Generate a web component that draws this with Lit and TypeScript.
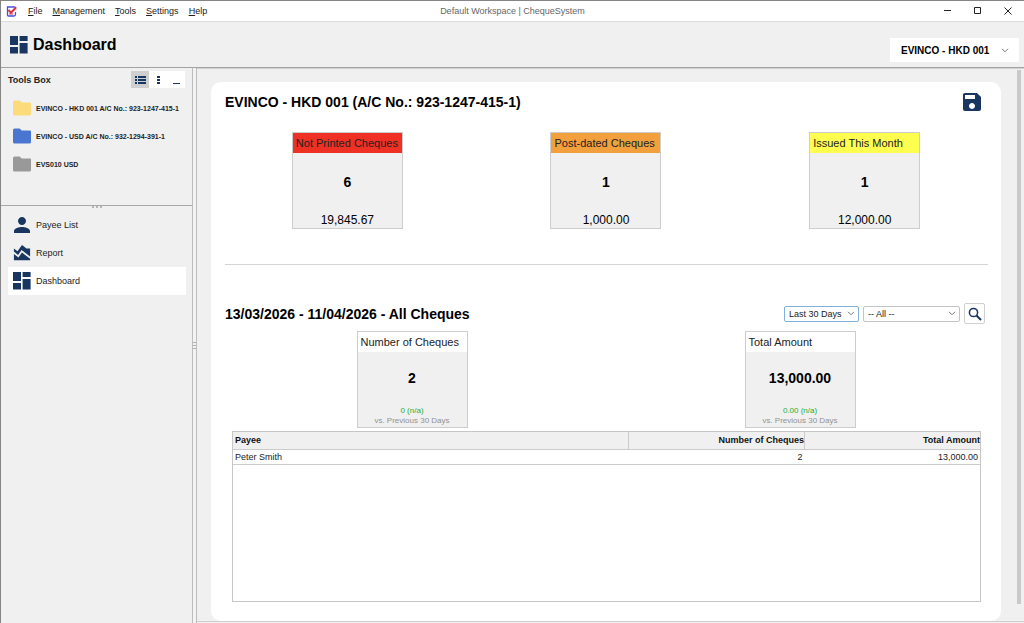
import { LitElement, html, css, svg } from "lit";
import { customElement, property, state } from "lit/decorators.js";
import { classMap } from "lit/directives/class-map.js";

const NAVY = "#18365f";

const dashboardIcon = html`<svg viewBox="0 0 18 18" width="18" height="18" fill=${NAVY} aria-hidden="true">
  <path d="M0 0h8v9H0zM9.600 0h8v5h-8zM0 11h8v6.500H0zM9.600 7h8v10.500h-8z" />
</svg>`;

const personIcon = html`<svg viewBox="3 3 18 18" width="18" height="18" fill=${NAVY} aria-hidden="true">
  <path d="M12 12c2.210 0 4-1.790 4-4s-1.790-4-4-4-4 1.790-4 4 1.790 4 4 4zm0 2c-2.670 0-8 1.340-8 4v2h16v-2c0-2.660-5.330-4-8-4z" />
</svg>`;

const reportIcon = html`<svg viewBox="2 2 20 20" width="18" height="18" fill=${NAVY} aria-hidden="true">
  <path d="M3 13v7h18v-1.500l-9-7L8 17zM3 7l4 3 5-7 5 4h4v8.970l-9.400-7.310-3.980 5.480L3 10.440z" />
</svg>`;

const saveIcon = html`<svg viewBox="3 3 18 18" width="18" height="18" fill=${NAVY} aria-hidden="true">
  <path d="M17 3H5c-1.110 0-2 .9-2 2v14c0 1.100.89 2 2 2h14c1.100 0 2-.9 2-2V7l-4-4zm-5 16c-1.660 0-3-1.340-3-3s1.340-3 3-3 3 1.340 3 3-1.340 3-3 3zm3-10H5V5h10v4z" />
</svg>`;

const searchIcon = html`<svg viewBox="0 0 14 14" width="14" height="14" fill="none" stroke=${NAVY} aria-hidden="true">
  <circle cx="5.500" cy="5.500" r="4.100" stroke-width="1.500" />
  <path d="m8.500 8.500 4.500 4.500" stroke-width="2" />
</svg>`;

const logoIcon = html`<svg viewBox="0 0 11 11" width="11" height="11" fill="none" aria-hidden="true">
  <path d="M9 1H1.500v8q0 1 1 1h5.500q1.500 0 1.500-2V6" stroke="#4a4fd8" stroke-width="1.300" />
  <path d="M2.500 4 5 6.800 10.200 1.200" stroke="#e0303f" stroke-width="2" />
  <path d="M3 8h4" stroke="#e0303f" />
</svg>`;

const listIcon = html`<svg viewBox="0 0 11 8" width="11" height="8" fill=${NAVY} aria-hidden="true">
  <path d="M0 0h2v2H0zM3 0h8v2H3zM0 3h2v2H0zM3 3h8v2H3zM0 6h2v2H0zM3 6h8v2H3z" />
</svg>`;

const dotsIcon = html`<svg viewBox="0 0 11 8" width="11" height="8" fill=${NAVY} aria-hidden="true">
  <path d="M4 0h3v2H4zM4 3h3v2H4zM4 6h3v2H4z" />
</svg>`;

const collapseIcon = html`<svg viewBox="0 0 11 8" width="11" height="8" fill=${NAVY} aria-hidden="true">
  <path d="M2 7h7v1H2z" />
</svg>`;

const folderIcon = (color: string) => html`<svg viewBox="0 0 18 16" width="18" height="16" fill=${color} aria-hidden="true">
  <path d="M1.500.5h5.200l2 2H17q1 0 1 1V14q0 1.500-1.500 1.500h-15Q0 15.500 0 14V2Q0 .5 1.500.5z" />
</svg>`;

const windowGlyph = (d: string) => html`<svg viewBox="0 0 8 8" width="8" height="8" fill="none" stroke="#222" aria-hidden="true">
  ${svg`<path d=${d} />`}
</svg>`;

@customElement("combo-box")
export class ComboBox extends LitElement {
  @property() label = "";
  @property({ attribute: false }) options: string[] = [];

  static styles = css`
    :host {
      display: grid;
      align-items: center;
      box-sizing: border-box;
    }
    select,
    svg {
      grid-area: 1 / 1;
    }
    select {
      appearance: none;
      box-sizing: border-box;
      width: 100%;
      height: 100%;
      margin: 0;
      border: 0;
      padding: 0 16px 0 var(--combo-inset, 4px);
      background: transparent;
      color: inherit;
      font: inherit;
      outline: none;
    }
    svg {
      justify-self: end;
      margin-right: var(--combo-arrow, 3px);
      pointer-events: none;
    }
  `;

  render() {
    return html`
      <select aria-label=${this.label}>
        ${this.options.map((o) => html`<option>${o}</option>`)}
      </select>
      <svg viewBox="0 0 8 5" width="8" height="5" fill="none" stroke="#777" aria-hidden="true">
        <path d="m1 .8 3 3 3-3" />
      </svg>
    `;
  }
}

@customElement("stat-card")
export class StatCard extends LitElement {
  @property() heading = "";
  @property() value = "";
  @property() amount = "";
  @property() change = "";
  @property() note = "";
  @property() tone = "plain";

  static styles = css`
    :host {
      display: block;
      width: 111px;
    }
    .card {
      display: flex;
      flex-direction: column;
      box-sizing: border-box;
      height: 97px;
      border: 1px solid #cdcdcd;
      background: #f0f0f0;
      text-align: center;
    }
    .heading {
      margin: 0;
      padding: 0 3px;
      font-size: 11px;
      font-weight: normal;
      line-height: 20px;
      text-align: left;
      white-space: nowrap;
      color: #222;
    }
    .plain { background: #fff; }
    .red { background: #ee3124; }
    .orange { background: #f2a03d; }
    .yellow { background: #ffff50; }
    .value {
      flex: 1;
      display: grid;
      place-items: center;
      padding-bottom: 2px;
      font-size: 14px;
      font-weight: bold;
    }
    .amount {
      font-size: 12px;
      line-height: 16px;
    }
    .small {
      font-size: 8px;
      line-height: 10px;
      color: #929292;
    }
    .change { color: #1fae2b; }
    .note { margin-bottom: 1px; }
  `;

  render() {
    return html`
      <article class="card">
        <h3 class=${"heading " + this.tone}>${this.heading}</h3>
        <div class="value">${this.value}</div>
        ${this.amount ? html`<div class="amount">${this.amount}</div>` : ""}
        ${this.change ? html`<div class="small change">${this.change}</div>` : ""}
        ${this.note ? html`<div class="small note">${this.note}</div>` : ""}
      </article>
    `;
  }
}

@customElement("app-root")
export class AppRoot extends LitElement {
  @state() private page = "Dashboard";

  private menus = ["File", "Management", "Tools", "Settings", "Help"];

  private accounts = [
    { name: "EVINCO - HKD 001 A/C No.: 923-1247-415-1", color: "#fbdb7c" },
    { name: "EVINCO - USD A/C No.: 932-1294-391-1", color: "#4a76d2" },
    { name: "EVS010 USD", color: "#999999" },
  ];

  private pages = [
    { name: "Payee List", icon: personIcon },
    { name: "Report", icon: reportIcon },
    { name: "Dashboard", icon: dashboardIcon },
  ];

  private rows = [{ payee: "Peter Smith", count: "2", total: "13,000.00" }];

  static styles = css`
    :host {
      display: flex;
      flex-direction: column;
      box-sizing: border-box;
      height: 100vh;
      border: 1px solid #858585;
      border-width: 1px 0 0 1px;
      background: #f0f0f0;
      color: #000;
      font: 9px "Liberation Sans", Arial, sans-serif;
    }
    button {
      margin: 0;
      border: 0;
      padding: 0;
      background: none;
      color: inherit;
      font: inherit;
    }
    svg { display: block; flex: none; }
    h1, h2 { margin: 0; }

    .titlebar {
      display: grid;
      grid-template-columns: 1fr auto 1fr;
      align-items: center;
      height: 20px;
      border-bottom: 1px solid #dcdcdc;
      background: #fff;
    }
    .menus {
      display: flex;
      align-items: center;
      padding-left: 5px;
    }
    .menus svg { margin-right: 6px; }
    .menu { padding: 0 5px; line-height: 20px; color: #222; }
    .mnemonic { text-decoration: underline; }
    .title { color: #666; }
    .window {
      display: flex;
      justify-content: flex-end;
      gap: 22px;
      padding-right: 12px;
    }

    .header {
      display: flex;
      justify-content: space-between;
      height: 45px;
      border-bottom: 1px solid #a3a3a3;
    }
    .brand {
      display: flex;
      align-items: center;
      gap: 5px;
      padding-left: 9px;
      font-size: 16px;
    }
    .brand h1 { font-size: inherit; }
    .account {
      align-self: flex-end;
      width: 129px;
      height: 24px;
      margin: 0 5px 5px 0;
      background: #fff;
      font-size: 10px;
      font-weight: bold;
      --combo-inset: 11px;
      --combo-arrow: 10px;
    }

    .body {
      display: grid;
      grid-template-columns: 191px 5px 1fr;
      flex: 1;
      min-height: 0;
    }
    .sidebar { display: flex; flex-direction: column; }
    .toolbox {
      box-sizing: border-box;
      height: 138px;
      border-bottom: 1px solid #a8a8a8;
    }
    .toolhead {
      display: flex;
      align-items: center;
      justify-content: space-between;
      padding: 3px 7px 0;
      margin-bottom: 6px;
    }
    .toolhead h2 { font-size: 9px; color: #222; }
    .tools { display: flex; background: #fff; }
    .tool {
      display: grid;
      place-items: center;
      width: 18px;
      height: 17px;
    }
    .tool.on { background: #cfcfcf; }
    .accounts { display: flex; flex-direction: column; }
    .folder {
      display: flex;
      align-items: center;
      gap: 5px;
      height: 28px;
      padding-left: 12px;
      font-size: 7px;
      font-weight: bold;
      white-space: nowrap;
      color: #222;
    }
    .grip {
      display: flex;
      justify-content: center;
      gap: 2px;
      height: 2px;
      margin-bottom: 3px;
    }
    .grip i { width: 2px; background: #b5b5b5; }
    .pages {
      display: flex;
      flex-direction: column;
      padding: 0 6px 0 7px;
    }
    .page {
      display: flex;
      align-items: center;
      gap: 5px;
      height: 28px;
      padding-left: 5px;
      color: #222;
    }
    .page.on { background: #fff; }
    .splitter {
      display: flex;
      flex-direction: column;
      align-items: center;
      justify-content: center;
      gap: 2px;
      border: 1px solid #bdbdbd;
      border-width: 0 1px 0 1px;
      background: #f3f3f3;
    }
    .splitter i { width: 3px; height: 1px; background: #b0b0b0; }

    .main {
      display: flex;
      min-width: 0;
      margin-bottom: 1px;
      border-top: 1px solid #d0d0d0;
      border-bottom: 1px solid #cfcfcf;
    }
    .sheet {
      display: flex;
      flex: 1;
      flex-direction: column;
      min-width: 0;
      margin: 13px 16px 0 14px;
      border-radius: 10px;
      background: #fff;
    }
    .scroll {
      width: 4px;
      margin: 1px 3px 17px 0;
      background: #c9c9c9;
    }
    .sheethead {
      display: flex;
      align-items: center;
      justify-content: space-between;
      height: 22px;
      margin: 9px 20px 19px 14px;
    }
    .sheethead h2, .range h2 { font-size: 14px; }
    .stats {
      display: grid;
      grid-auto-columns: 1fr;
      grid-auto-flow: column;
      justify-items: center;
      margin: 0 7px;
    }
    .rule {
      margin: 35px 13px 38px 14px;
      border: 0;
      border-top: 1px solid #d4d4d4;
    }
    .range {
      display: flex;
      align-items: center;
      gap: 4px;
      margin: 0 16px 7px 14px;
    }
    .range h2 { flex: 1; }
    .filter {
      width: 97px;
      height: 16px;
      border: 1px solid #c4c4c4;
      border-radius: 2px;
      background: #fff;
      color: #222;
    }
    .filter.period { width: 75px; border-color: #7fb0da; }
    .search {
      display: grid;
      place-items: center;
      width: 21px;
      height: 21px;
      border: 1px solid #d0d0d0;
      border-radius: 2px;
    }
    .tablebox {
      flex: 1;
      margin: 3px 20px 19px 21px;
      border: 1px solid #c6c6c6;
    }
    table {
      width: 100%;
      border-collapse: collapse;
      table-layout: fixed;
      color: #222;
    }
    th, td {
      box-sizing: border-box;
      padding: 0 2px;
      text-align: right;
      border-bottom: 1px solid #cccccc;
    }
    th { height: 17px; padding: 0; background: #f0f0f0; color: #111; }
    td { height: 15px; }
    th + th { border-left: 1px solid #cccccc; }
    th:first-child { padding-left: 2px; }
    th:first-child, td:first-child { text-align: left; }
    .payee { width: 53%; }
  `;

  render() {
    return html`
      <header class="titlebar">
        <nav class="menus">
          ${logoIcon}
          ${this.menus.map(
            (m) => html`<button class="menu"><span class="mnemonic">${m[0]}</span>${m.slice(1)}</button>`
          )}
        </nav>
        <div class="title">Default Workspace | ChequeSystem</div>
        <div class="window">
          <button aria-label="Minimize">${windowGlyph("M0 3.500h7")}</button>
          <button aria-label="Maximize">${windowGlyph("M.5.5h6v6h-6z")}</button>
          <button aria-label="Close">${windowGlyph("m.5.5 7 7m0-7-7 7")}</button>
        </div>
      </header>

      <div class="header">
        <div class="brand">${dashboardIcon}<h1>Dashboard</h1></div>
        <combo-box class="account" label="Account" .options=${["EVINCO - HKD 001"]}></combo-box>
      </div>

      <div class="body">
        <aside class="sidebar">
          <section class="toolbox">
            <div class="toolhead">
              <h2>Tools Box</h2>
              <div class="tools">
                <button class="tool on" aria-label="List view">${listIcon}</button>
                <button class="tool" aria-label="Compact view">${dotsIcon}</button>
                <button class="tool" aria-label="Collapse">${collapseIcon}</button>
              </div>
            </div>
            <div class="accounts">
              ${this.accounts.map(
                (a) => html`<button class="folder">${folderIcon(a.color)}<span>${a.name}</span></button>`
              )}
            </div>
          </section>
          <div class="grip"><i></i><i></i><i></i></div>
          <nav class="pages">
            ${this.pages.map(
              (p) => html`<button
                class=${classMap({ page: true, on: p.name === this.page })}
                @click=${() => (this.page = p.name)}
              >${p.icon}<span>${p.name}</span></button>`
            )}
          </nav>
        </aside>
        <div class="splitter"><i></i><i></i><i></i></div>
        <main class="main">
          <div class="sheet">
            <div class="sheethead">
              <h2>EVINCO - HKD 001 (A/C No.: 923-1247-415-1)</h2>
              <button aria-label="Save">${saveIcon}</button>
            </div>
            <div class="stats">
              <stat-card tone="red" heading="Not Printed Cheques" value="6" amount="19,845.67"></stat-card>
              <stat-card tone="orange" heading="Post-dated Cheques" value="1" amount="1,000.00"></stat-card>
              <stat-card tone="yellow" heading="Issued This Month" value="1" amount="12,000.00"></stat-card>
            </div>
            <hr class="rule" />
            <div class="range">
              <h2>13/03/2026 - 11/04/2026 - All Cheques</h2>
              <combo-box class="filter period" label="Period" .options=${["Last 30 Days"]}></combo-box>
              <combo-box class="filter" label="Cheque status" .options=${["-- All --"]}></combo-box>
              <button class="search" aria-label="Search">${searchIcon}</button>
            </div>
            <div class="stats">
              <stat-card heading="Number of Cheques" value="2" change="0 (n/a)" note="vs. Previous 30 Days"></stat-card>
              <stat-card heading="Total Amount" value="13,000.00" change="0.00 (n/a)" note="vs. Previous 30 Days"></stat-card>
            </div>
            <div class="tablebox">
              <table>
                <thead>
                  <tr><th class="payee">Payee</th><th>Number of Cheques</th><th>Total Amount</th></tr>
                </thead>
                <tbody>
                  ${this.rows.map((r) => html`<tr><td>${r.payee}</td><td>${r.count}</td><td>${r.total}</td></tr>`)}
                </tbody>
              </table>
            </div>
          </div>
          <div class="scroll"></div>
        </main>
      </div>
    `;
  }
}
